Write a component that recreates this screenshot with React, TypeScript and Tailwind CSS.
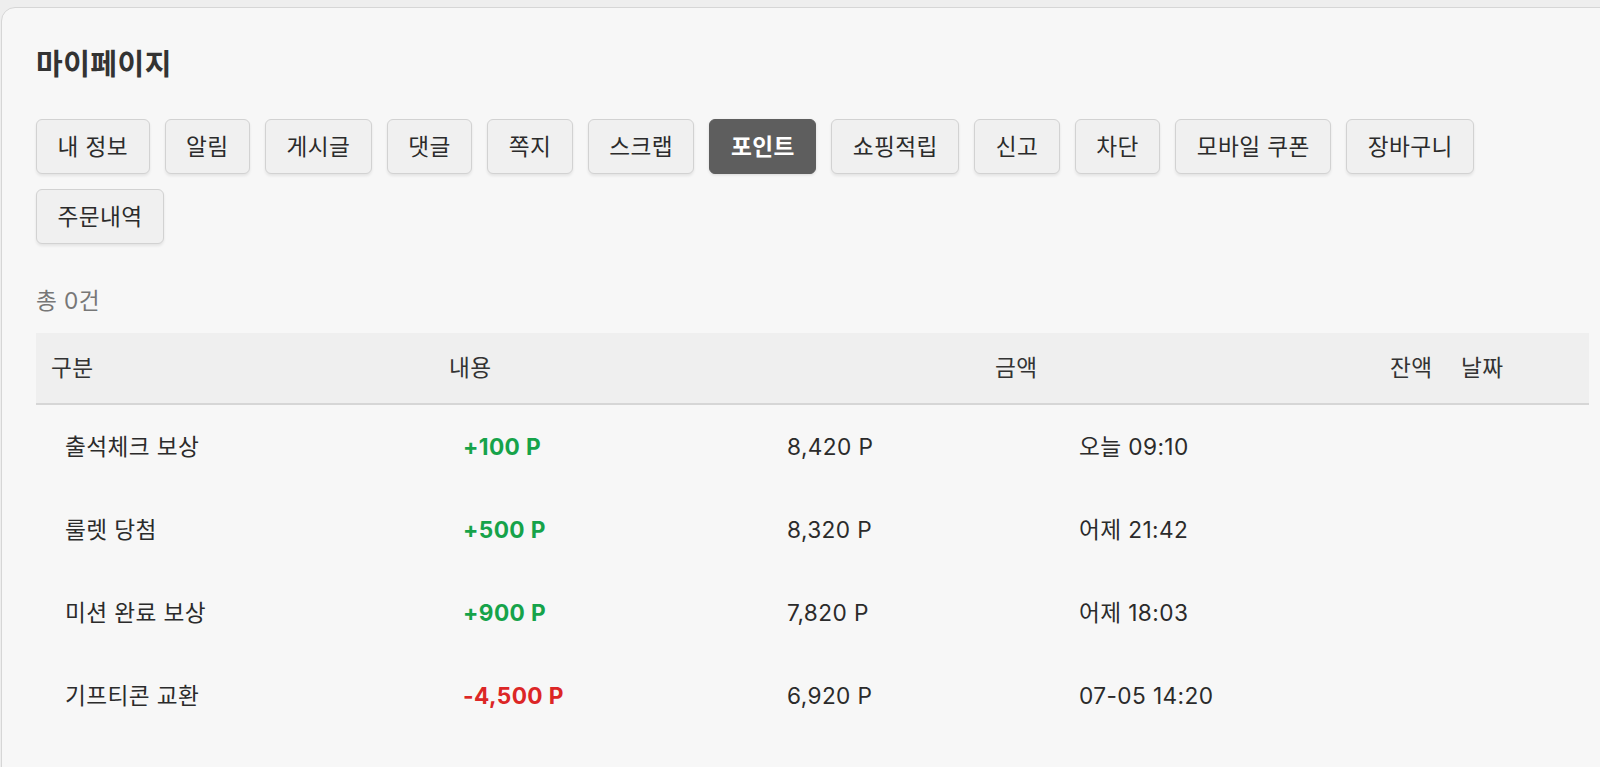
const TABS = [
  "내 정보",
  "알림",
  "게시글",
  "댓글",
  "쪽지",
  "스크랩",
  "포인트",
  "쇼핑적립",
  "신고",
  "차단",
  "모바일 쿠폰",
  "장바구니",
  "주문내역",
];

const ACTIVE = "포인트";

type Row = { label: string; amount: string; balance: string; date: string };

const ROWS: Row[] = [
  { label: "출석체크 보상", amount: "+100 P", balance: "8,420 P", date: "오늘 09:10" },
  { label: "룰렛 당첨", amount: "+500 P", balance: "8,320 P", date: "어제 21:42" },
  { label: "미션 완료 보상", amount: "+900 P", balance: "7,820 P", date: "어제 18:03" },
  { label: "기프티콘 교환", amount: "-4,500 P", balance: "6,920 P", date: "07-05 14:20" },
];

export default function App() {
  return (
    <div className="h-screen overflow-hidden bg-[#eeeeee] pl-[1px] pt-[7px] font-['Inter','Noto_Sans_CJK_KR',sans-serif] text-[22.67px] tracking-[0.4px] text-[#2b2b2b]">
      <div className="min-h-[820px] w-[1640px] rounded-tl-[14px] border-[1.5px] border-[#d6d6d6] bg-[#f7f7f7] pl-[34px] pt-[38px]">
        <div className="w-[1553px]">
          <h1 className="text-[29px] font-bold leading-[38px] tracking-[0.5px] text-[#333]">마이페이지</h1>

          <div className="mt-[35px] flex flex-wrap gap-[15px]">
            {TABS.map((t) => {
              const on = t === ACTIVE;
              return (
                <button
                  key={t}
                  type="button"
                  className={
                    on
                      ? "whitespace-nowrap rounded-[6px] border border-[#5e5e5e] bg-[#5e5e5e] px-[20.5px] py-[10.5px] font-semibold leading-[32px] text-white shadow-[0_1px_3px_rgba(0,0,0,0.12)]"
                      : "whitespace-nowrap rounded-[6px] border border-[#d2d2d2] bg-[#f0f0f0] px-[20.5px] py-[10.5px] leading-[32px] text-[#2b2b2b] shadow-[0_2px_3px_rgba(0,0,0,0.08)]"
                  }
                >
                  {t}
                </button>
              );
            })}
          </div>

          <p className="mt-[41px] leading-[32px] text-[#777]">총 0건</p>

          <div className="mt-[16px] grid h-[72px] grid-cols-[398px_546px_395px_71px_1fr] items-center whitespace-nowrap border-b-2 border-[#d6d6d6] bg-[#efefef] text-[#333]">
            <div className="pl-[15px]">구분</div>
            <div className="pl-[15px]">내용</div>
            <div className="pl-[15px]">금액</div>
            <div className="pl-[15px]">잔액</div>
            <div className="pl-[15px]">날짜</div>
          </div>

          {ROWS.map((r) => (
            <div
              key={r.label}
              className="grid h-[83px] grid-cols-[398px_324px_292px_1fr] items-center whitespace-nowrap text-[#2b2b2b]"
            >
              <div className="px-[29px]">{r.label}</div>
              <div
                className={
                  r.amount.startsWith("-")
                    ? "px-[29px] font-bold text-[#dc2626]"
                    : "px-[29px] font-bold text-[#16a34a]"
                }
              >
                {r.amount}
              </div>
              <div className="px-[29px]">{r.balance}</div>
              <div className="px-[29px]">{r.date}</div>
            </div>
          ))}
        </div>
      </div>
    </div>
  );
}
